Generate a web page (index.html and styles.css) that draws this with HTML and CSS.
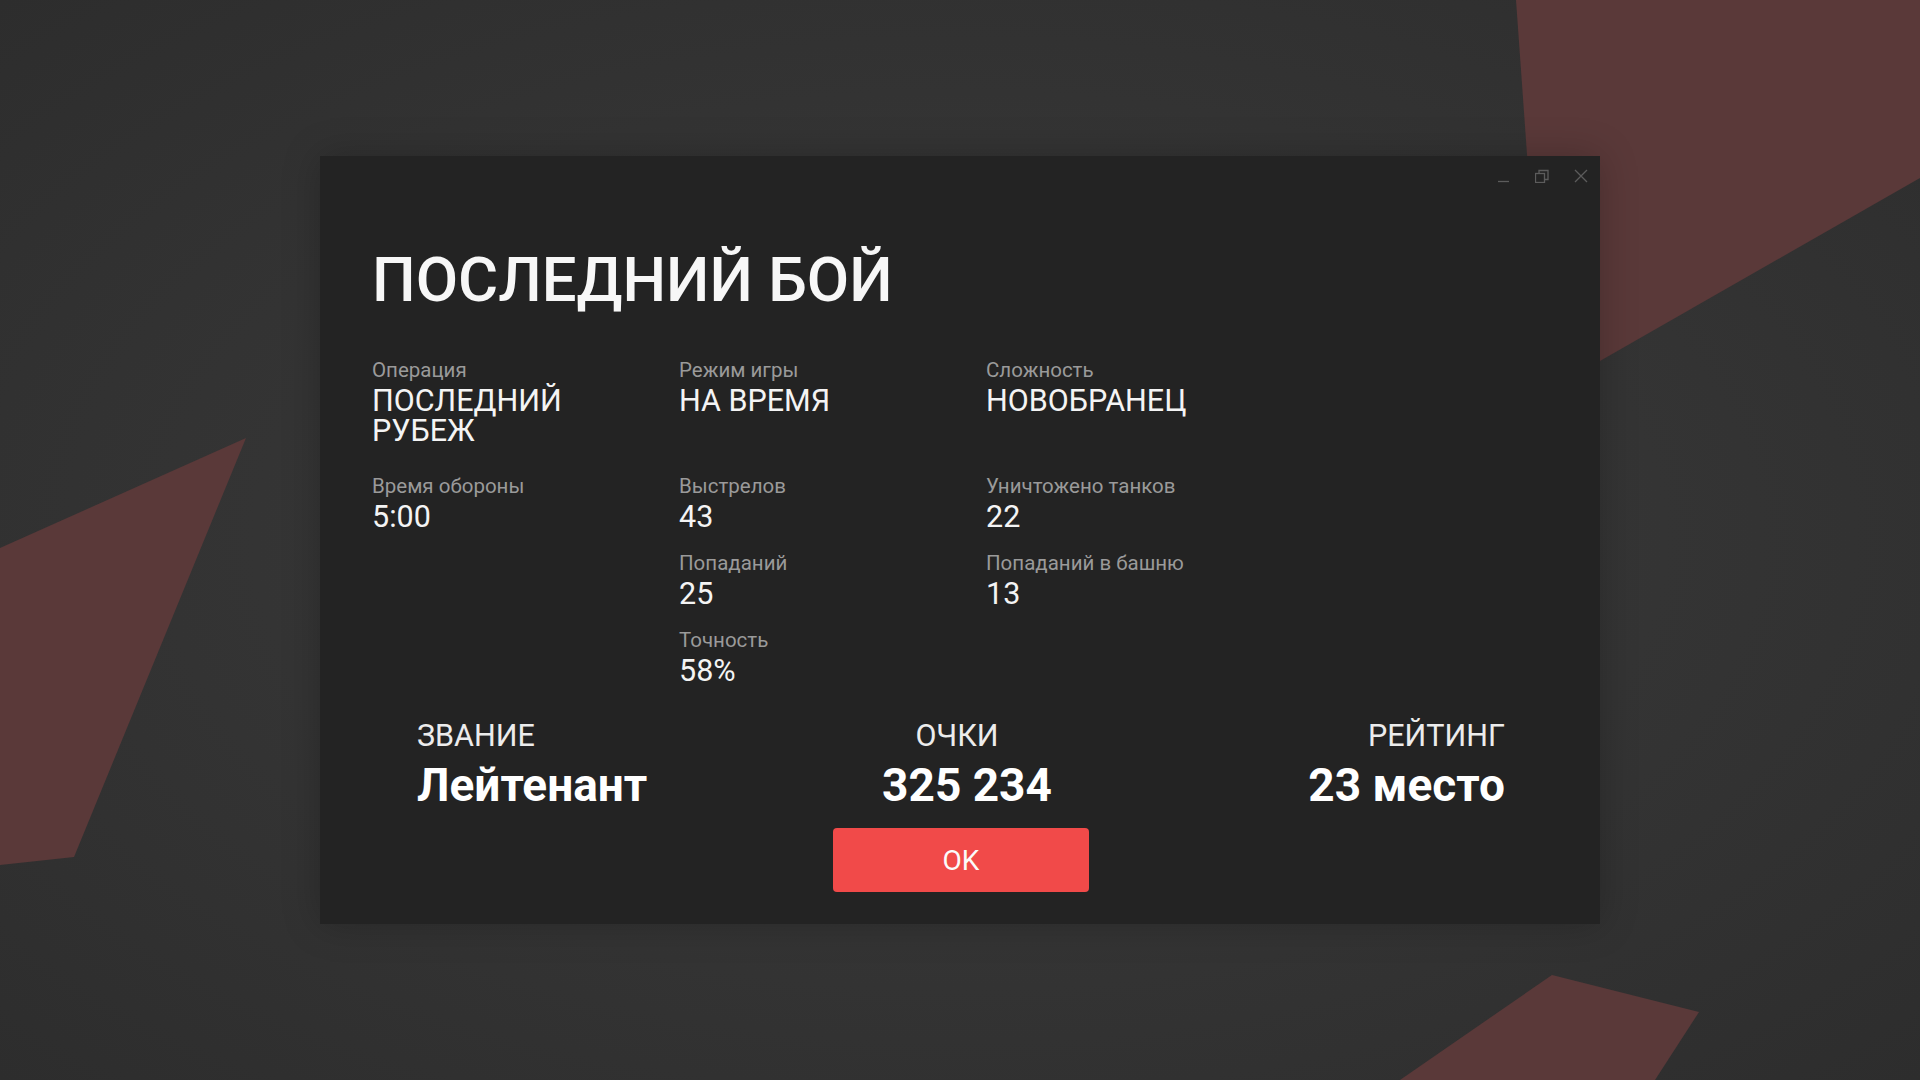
FILE: index.html
```html
<!DOCTYPE html>
<html lang="ru">
<head>
<meta charset="utf-8">
<title>Последний бой</title>
<link rel="stylesheet" href="styles.css">
</head>
<body>
<div class="stage">
  <svg class="backdrop" width="1920" height="1080" viewBox="0 0 1920 1080" aria-hidden="true">
    <polygon class="shard" points="1516,0 1920,0 1920,178 1544,393"/>
    <polygon class="shard" points="246,438 74,857 0,865 0,548"/>
    <polygon class="shard" points="1552,975 1699,1012 1655,1080 1400,1080"/>
  </svg>

  <div class="dialog">
    <div class="titlebar">
      <button class="winbtn" aria-label="Свернуть">
        <svg width="14" height="14" viewBox="0 0 14 14"><path d="M2 12.5H13" /></svg>
      </button>
      <button class="winbtn" aria-label="Восстановить">
        <svg width="14" height="14" viewBox="0 0 14 14"><rect x="0.5" y="4.5" width="9" height="9"/><path d="M4 4.5V1.5H13V10.5H9.5"/></svg>
      </button>
      <button class="winbtn" aria-label="Закрыть">
        <svg width="14" height="14" viewBox="0 0 14 14"><path d="M1 1L13 13M13 1L1 13"/></svg>
      </button>
    </div>

    <div class="content">
      <h1 class="title">ПОСЛЕДНИЙ БОЙ</h1>

      <div class="stats">
        <div class="stat">
          <div class="label">Операция</div>
          <div class="value">ПОСЛЕДНИЙ РУБЕЖ</div>
        </div>
        <div class="stat">
          <div class="label">Режим игры</div>
          <div class="value">НА ВРЕМЯ</div>
        </div>
        <div class="stat">
          <div class="label">Сложность</div>
          <div class="value">НОВОБРАНЕЦ</div>
        </div>

        <div class="stack">
          <div class="stat">
            <div class="label">Время обороны</div>
            <div class="value">5:00</div>
          </div>
        </div>
        <div class="stack">
          <div class="stat">
            <div class="label">Выстрелов</div>
            <div class="value">43</div>
          </div>
          <div class="stat">
            <div class="label">Попаданий</div>
            <div class="value">25</div>
          </div>
          <div class="stat">
            <div class="label">Точность</div>
            <div class="value">58%</div>
          </div>
        </div>
        <div class="stack">
          <div class="stat">
            <div class="label">Уничтожено танков</div>
            <div class="value">22</div>
          </div>
          <div class="stat">
            <div class="label">Попаданий в башню</div>
            <div class="value">13</div>
          </div>
        </div>
      </div>

      <div class="summary">
        <div class="sum sum-left">
          <div class="sum-label">ЗВАНИЕ</div>
          <div class="sum-value">Лейтенант</div>
        </div>
        <div class="sum sum-mid">
          <div class="sum-label">ОЧКИ</div>
          <div class="sum-value">325 234</div>
        </div>
        <div class="sum sum-right">
          <div class="sum-label">РЕЙТИНГ</div>
          <div class="sum-value">23 место</div>
        </div>
      </div>

      <div class="actions">
        <button class="ok">OK</button>
      </div>
    </div>
  </div>
</div>
</body>
</html>
```

FILE: styles.css
```css
* { box-sizing: border-box; }

html, body {
  margin: 0;
  padding: 0;
  width: 1920px;
  height: 1080px;
  overflow: hidden;
}

body {
  font-family: Roboto, "Noto Sans", "Liberation Sans", sans-serif;
  background: radial-gradient(ellipse at 50% 50%, #3a3a3a 0%, #353535 45%, #2d2d2d 100%);
  color: #f2f2f2;
}

.stage {
  position: relative;
  width: 1920px;
  height: 1080px;
  display: flex;
  align-items: center;
  justify-content: center;
}

.backdrop {
  position: absolute;
  left: 0;
  top: 0;
}

.shard {
  fill: #5a3939;
}

.dialog {
  position: relative;
  z-index: 1;
  width: 1280px;
  height: 768px;
  background: #232323;
  box-shadow: 0 0 36px rgba(0, 0, 0, 0.22);
  display: flex;
  flex-direction: column;
}

.titlebar {
  display: flex;
  justify-content: flex-end;
  height: 40px;
}

.winbtn {
  width: 39px;
  height: 40px;
  padding: 0;
  border: 0;
  background: transparent;
  display: flex;
  align-items: center;
  justify-content: center;
}

.winbtn svg {
  fill: none;
  stroke: #5c5c5c;
  stroke-width: 1.3;
}

.content {
  padding: 0 48px 32px 52px;
  display: flex;
  flex-direction: column;
}

.title {
  margin: 48px 0 0 0;
  font-size: 61.5px;
  font-weight: 500;
  line-height: 72px;
  color: #f7f7f7;
  letter-spacing: 0;
}

.stats {
  margin-top: 42px;
  display: grid;
  grid-template-columns: 275px 275px 275px;
  column-gap: 32px;
  row-gap: 28px;
  align-items: start;
}

.stack {
  display: flex;
  flex-direction: column;
  gap: 19px;
}

.label {
  font-size: 20.5px;
  line-height: 24px;
  color: #9a9a9a;
  margin-bottom: 4px;
}

.value {
  font-size: 30.5px;
  line-height: 30px;
  color: #f4f4f4;
}

.summary {
  margin: 32px 47px 0 45px;
  display: grid;
  grid-template-columns: 1fr auto 1fr;
  align-items: start;
}

.sum-left { text-align: left; }
.sum-mid { text-align: center; }
.sum-right { text-align: right; }

.sum-label {
  font-size: 30.5px;
  line-height: 35px;
  color: #ececec;
  margin-bottom: 5px;
}

.sum-mid .sum-label { padding-right: 8px; }
.sum-mid .sum-value { padding-left: 12px; }

.sum-value {
  font-size: 46px;
  font-weight: 700;
  line-height: 54px;
  color: #ffffff;
}

.actions {
  margin-top: 16px;
  padding-right: 2px;
  display: flex;
  justify-content: center;
}

.ok {
  width: 256px;
  height: 64px;
  border: 0;
  border-radius: 4px;
  background: #f14a49;
  color: #fbfbfb;
  font-family: Roboto, "Noto Sans", "Liberation Sans", sans-serif;
  font-size: 28px;
  font-weight: 400;
  padding: 0;
}
```
